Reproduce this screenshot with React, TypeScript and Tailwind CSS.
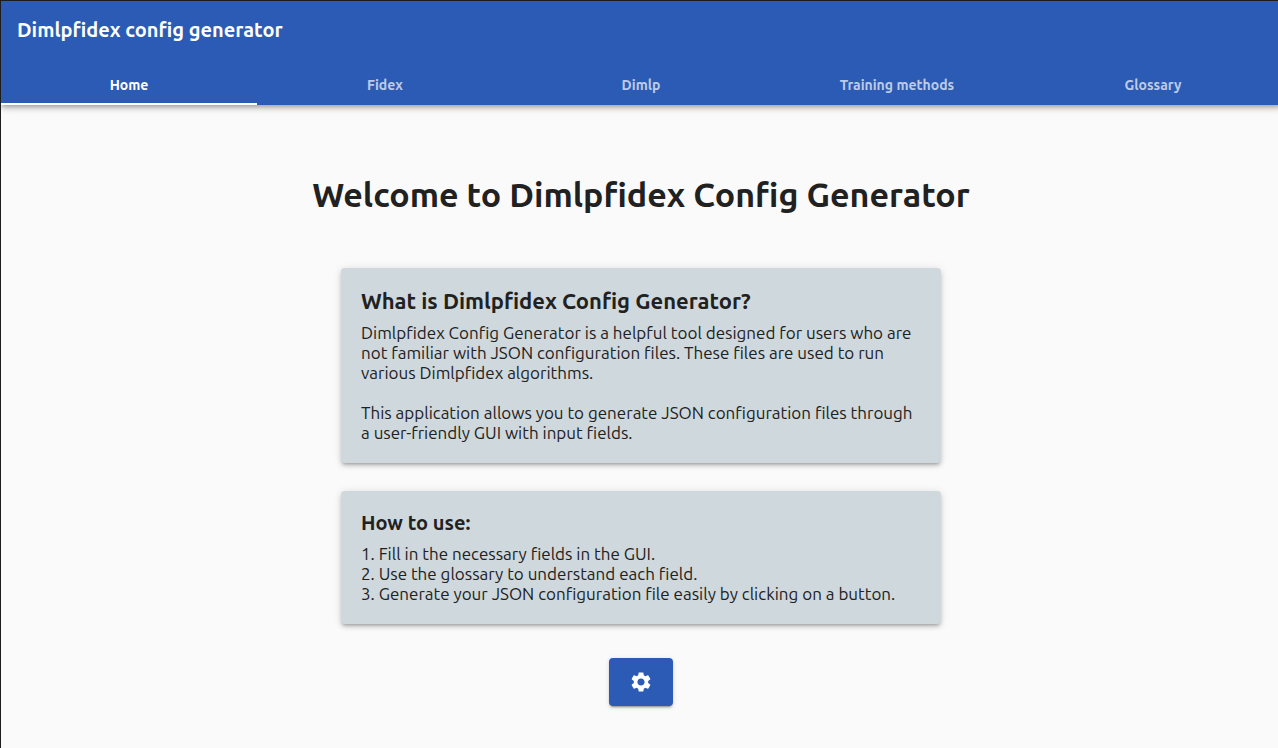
import { useState } from "react";
import { MdSettings } from "react-icons/md";

const tabs = ["Home", "Fidex", "Dimlp", "Training methods", "Glossary"];

const steps = [
  "Fill in the necessary fields in the GUI.",
  "Use the glossary to understand each field.",
  "Generate your JSON configuration file easily by clicking on a button.",
];

const cardClass =
  "w-full max-w-[600px] rounded-[4px] bg-[#cfd8dd] p-5 shadow-[0_3px_3px_-2px_rgba(0,0,0,0.2),0_3px_4px_0_rgba(0,0,0,0.14),0_1px_8px_0_rgba(0,0,0,0.12)]";

export default function App() {
  const [active, setActive] = useState("Home");

  return (
    <div className="min-h-screen overflow-hidden border-t border-l border-[#1d1d20] bg-[#fafafa] font-['Ubuntu','Noto_Sans',sans-serif] text-[#212121]">
      <div className="-mr-[3px]">
        <header className="bg-[#2b5bb5] text-white shadow-[0_2px_4px_-1px_rgba(0,0,0,0.2),0_4px_5px_0_rgba(0,0,0,0.14),0_1px_10px_0_rgba(0,0,0,0.12)]">
          <div className="flex h-14 items-center px-4 pt-0.5 text-xl font-bold">
            Dimlpfidex config generator
          </div>
          <nav className="grid h-12 grid-cols-5">
            {tabs.map((tab) => (
              <button
                key={tab}
                type="button"
                onClick={() => setActive(tab)}
                className={
                  tab === active
                    ? "border-b-2 border-white pt-2.5 text-sm font-bold text-white"
                    : "border-b-2 border-transparent pt-2.5 text-sm font-bold text-white/70"
                }
              >
                {tab}
              </button>
            ))}
          </nav>
        </header>

        <main className="flex flex-col items-center px-4 pt-16 pb-10">
          <h1 className="text-[34px] leading-[50px] font-bold">
            Welcome to Dimlpfidex Config Generator
          </h1>

          <section className={`${cardClass} mt-[49px]`}>
            <h2 className="mb-2.5 text-[22px] leading-[25px] font-bold">
              What is Dimlpfidex Config Generator?
            </h2>
            <p className="text-[17px] leading-5">
              Dimlpfidex Config Generator is a helpful tool designed for users who are not familiar
              with JSON configuration files. These files are used to run various Dimlpfidex
              algorithms.
            </p>
            <p className="mt-5 text-[17px] leading-5">
              This application allows you to generate JSON configuration files through a
              user-friendly GUI with input fields.
            </p>
          </section>

          <section className={`${cardClass} mt-7`}>
            <h2 className="mb-2.5 text-xl leading-[23px] font-bold">How to use:</h2>
            <ol className="text-[17px] leading-5">
              {steps.map((step, index) => (
                <li key={step}>
                  {index + 1}. {step}
                </li>
              ))}
            </ol>
          </section>

          <button
            type="button"
            aria-label="Settings"
            className="mt-[34px] flex h-12 w-16 items-center justify-center rounded-[4px] bg-[#2b5bb5] text-white shadow-[0_3px_1px_-2px_rgba(0,0,0,0.2),0_2px_2px_0_rgba(0,0,0,0.14),0_1px_5px_0_rgba(0,0,0,0.12)]"
          >
            <MdSettings className="size-6" />
          </button>
        </main>
      </div>
    </div>
  );
}
